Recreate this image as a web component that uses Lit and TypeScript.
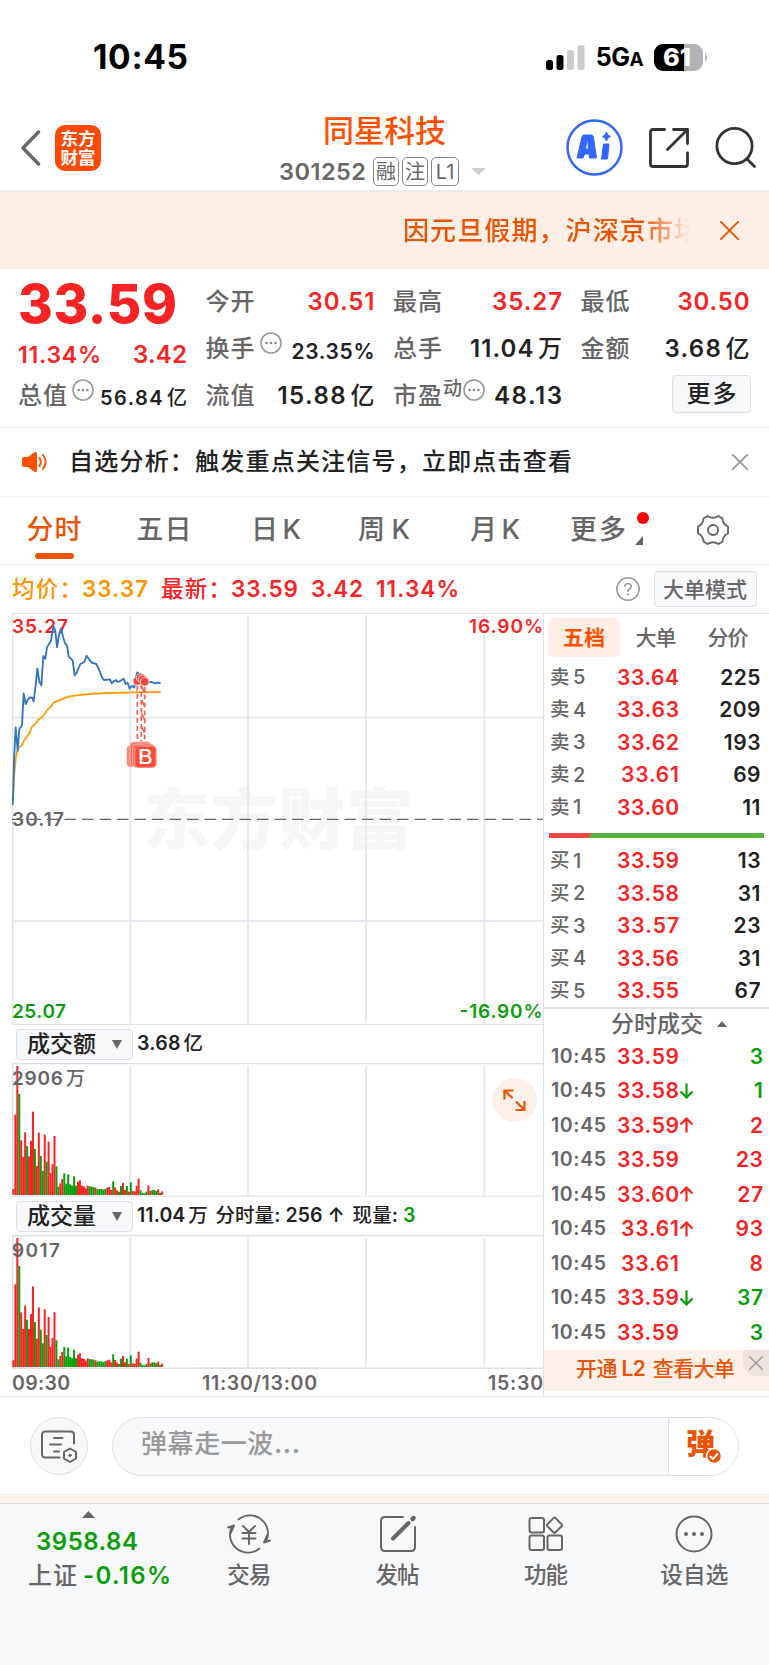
import { LitElement, html, svg, css } from "lit";
import { customElement, property } from "lit/decorators.js";
import { classMap } from "lit/directives/class-map.js";

// Single line of text whose tracking is adjusted to occupy a given width.
// Figures are set slightly heavier than the ideographs and separated from them.
@customElement("fit-text")
class FitText extends LitElement {
  @property({ type: Number }) w = 0;
  @property() text = "";
  static styles = css`
    :host { display: inline-block; flex: none; white-space: pre; line-height: 1; }
    span { display: inline-block; }
    b { font-weight: var(--figure-weight, 580); }
    i { font-style: normal; }
    b + i { margin-left: 0.14em; }
  `;
  render() {
    const runs = this.text.match(/[\u2e80-\uffff]+|[^\u2e80-\uffff]+/g) ?? [];
    return html`<span>${runs.map((r) => (/[\u2e80-\uffff]/.test(r) ? html`<i>${r}</i>` : html`<b>${r}</b>`))}</span>`;
  }
  updated() {
    const s = this.renderRoot.querySelector("span") as HTMLElement;
    s.style.letterSpacing = "0px";
    const natural = s.getBoundingClientRect().width;
    const n = Array.from(this.text).length;
    if (this.w && n > 1) {
      const ls = (this.w - natural) / (n - 1);
      s.style.letterSpacing = ls + "px";
      s.style.marginRight = -ls + "px";
    }
  }
}

const t = (text: string, w: number, cls = "") =>
  html`<fit-text class=${cls} .text=${text} .w=${w}></fit-text>`;

const more = html`<svg class="dots" width="22" height="22" viewBox="0 0 22 22">
  <circle cx="11" cy="11" r="10" fill="none" stroke="#999" stroke-width="1.6" />
  <circle cx="6.6" cy="11" r="1.3" fill="#888" /><circle cx="11" cy="11" r="1.3" fill="#888" /><circle cx="15.4" cy="11" r="1.3" fill="#888" />
</svg>`;

const asks: [string, string, string][] = [
  ["卖5", "33.64", "225"], ["卖4", "33.63", "209"], ["卖3", "33.62", "193"], ["卖2", "33.61", "69"], ["卖1", "33.60", "11"],
];
const bids: [string, string, string][] = [
  ["买1", "33.59", "13"], ["买2", "33.58", "31"], ["买3", "33.57", "23"], ["买4", "33.56", "31"], ["买5", "33.55", "67"],
];
const ticks: [string, number, string, boolean][] = [
  ["33.59", 0, "3", false], ["33.58", -1, "1", false], ["33.59", 1, "2", true], ["33.59", 0, "23", true],
  ["33.60", 1, "27", true], ["33.61", 1, "93", true], ["33.61", 0, "8", true], ["33.59", -1, "37", false], ["33.59", 0, "3", false],
];

const bars =
  "18r 241r 387r 303g 164r 114r 188r 147g 116r 162r 250r 138g 87r 187r 117g 72g 181r 100g 160r 66r 92r 177r 86g 25g 35r 48r 65g 34g 62g 32g 28g 56g 28g 40r 44r 28r 26r 20r 28r 26g 25g 24g 22r 17g 18g 18g 16g 18g 22r 24r 15r 41g 23r 14r 10g 27g 36r 15r 27g 10r 38g 12r 11r 27r 49r 14g 6g 5g 10g 29r 12r 15g 15g 12g 17r 6g 11r".split(" ");
const lots =
  "20r 248r 387r 303g 164r 114r 184r 142g 114r 159r 242r 135g 85r 179r 112g 71g 173r 96g 150r 61r 87r 164r 80g".split(" ");

const price =
  "38,735 40,690 42,600 47,502 53,572 58,508 66,495 71,400 77,432 83,420 89,412 96,413 101,424 107,375 112,325 118,365 124,376 130,288 136,296 141,262 147,252 153,242 160,198 166,212 171,262 177,225 183,205 189,230 195,250 201,256 206,290 212,295 218,302 224,346 230,338 241,312 253,306 260,287 266,296 275,308 289,312 301,338 306,352 312,360 330,358 335,370 341,364 348,360 353,366 359,364 371,356 377,372 383,368 389,386 395,378 403,382 408,350 412,337 420,350 440,366 452,366 460,368 466,370 472,368 482,370";
const average =
  "38,720 42,650 48,590 54,565 66,555 72,542 88,520 96,500 106,492 114,480 128,470 142,450 152,440 162,427 185,418 205,410 230,406 270,402 320,399 400,397 482,396";

@customElement("app-root")
class AppRoot extends LitElement {
  static styles = css`
    :host { display: block; width: 769px; height: 1665px; overflow: hidden; background: #fff; color: #222;
      font-family: Inter, "Noto Sans CJK SC", sans-serif; font-weight: 500; line-height: 1; }
    * { box-sizing: border-box; }
    svg { display: block; flex: none; }
    svg text { font-family: Inter, "Noto Sans CJK SC", sans-serif; }
    .row { display: flex; align-items: center; }
    .red { color: #f82323; } .green { color: #0a9f0a; } .gray { color: #666; } .avg { color: #ff9500; }
    .s19 { font-size: 19.5px; } .s20 { font-size: 20px; } .s21 { font-size: 21px; }
    .s22 { font-size: 22.5px; } .s23 { font-size: 23px; } .s24 { font-size: 24px; } .s26 { font-size: 26px; }

    .status { height: 100px; padding: 15px 61px 0 93px; justify-content: space-between; color: #000; font-weight: 700; }
    .time { font-size: 33.5px; --figure-weight: 700; }
    .signals { gap: 11px; }
    .net { font-size: 25px; letter-spacing: -0.6px; } .net small { font-size: 19px; }

    .header { height: 92px; padding: 5px 13px 0 20px; border-bottom: 2px solid #ececee; }
    .brand { width: 254px; gap: 14px; }
    .logo { width: 46px; height: 46px; border-radius: 10px; background: #ff4800; color: #fff; font-size: 17.5px; line-height: 19px;
      font-weight: 700; text-align: center; padding-top: 4px; }
    .titles { width: 221px; flex: none; display: flex; flex-direction: column; align-items: center; gap: 11px; padding-top: 6px; }
    .name { font-size: 31px; color: #ff5000; }
    .code { gap: 3px; color: #666; align-self: flex-start; margin-left: 5px; }
    .num { font-size: 23.5px; margin-right: 4px; }
    .tag { height: 29px; width: 26px; border: 1.5px solid #888; border-radius: 5px; font-size: 20px; font-weight: 400; display: flex; align-items: center; justify-content: center; }
    .tag.wide { width: 28px; margin-right: 9px; }
    .actions { margin-left: auto; gap: 26px; }

    .notice { height: 77px; background: #fdeee6; color: #ea5504; padding-left: 403px; }
    .notice .clip { width: 287px; overflow: hidden; -webkit-mask-image: linear-gradient(90deg, #000 83%, transparent 100%); padding: 4px 0; }
    .notice svg { margin-left: 30px; }

    .quote { height: 159px; padding: 9px 0 0 18px; display: grid; grid-template-columns: repeat(4, 169px); column-gap: 18.5px; grid-template-rows: repeat(3, 47px); border-bottom: 1.5px solid #f2f2f4; }
    .cell { display: flex; align-items: center; justify-content: space-between; }
    .last { grid-row: span 2; display: flex; flex-direction: column; }
    .big { font-size: 53px; --figure-weight: 800; height: 53px; color: #f82323; }
    .chg { display: flex; justify-content: space-between; padding-top: 12px; align-items: center; }
    .cell .dots { margin: 0 auto 11px 5px; }
    .cell sup { font-size: 19px; line-height: 1; margin: 0 0 33px 0; padding-left: 1px; color: #666; height: 0; }
    .cell sup + .dots { margin-left: 1px; }
    .btn { background: #f7f8fa; border: 1.5px solid #dcdfe6; border-radius: 4px; display: flex; align-items: center; justify-content: center; }
    .cell .btn { margin: 0 -1.5px 3px auto; width: 79px; height: 38px; }
    .small { margin-top: 5px; }

    .signal { height: 69px; padding: 0 21px; border-bottom: 1.5px solid #f2f2f4; }
    .signal fit-text { margin-left: 21px; } .signal .x { margin-left: auto; }

    .tabs { height: 68px; padding-left: 26px; border-bottom: 1.5px solid #f0f0f2; color: #666; font-size: 27px; --figure-weight: 500; }
    .tab { height: 66px; display: flex; flex-direction: column; align-items: center; justify-content: flex-end; gap: 10px; width: 56px; }
    .tab.on { color: #ea5504; }
    .tab i { width: 39px; height: 6px; border-radius: 3px; margin-bottom: 5px; }
    .tab.on i { background: #ea5504; }
    .t2 { margin-left: 54px; } .t3 { margin-left: 56px; } .t4 { margin-left: 52px; } .t5 { margin-left: 55px; } .t6 { margin-left: 47px; }
    .flag { margin-left: 8px; margin-bottom: 2px; } .gear { margin-left: 46px; margin-bottom: 2px; }

    .legend { height: 48px; padding-left: 12px; }
    .legend .v { margin: 0 13px 0 0; }
    .legend .q { margin-left: auto; }
    .legend .btn { width: 103px; height: 36px; margin: 0 12.5px 0 14px; }

    .main { display: flex; height: 784px; border-bottom: 1.5px solid #e6e8ea; }
    .charts { width: 544px; padding-left: 12px; border-right: 1.5px solid #dfe1e8; }
    .pick { height: 38px; padding-left: 4px; }
    .pick .btn { width: 117px; height: 31px; padding: 0 10px; justify-content: space-between; margin-right: 4px; }
    .pick .now { font-weight: 580; }
    .axis { height: 27px; padding-top: 3px; color: #666; }
    .axis .noon { margin: 0 auto 0 132px; }

    .book { width: 225px; border-top: 1.5px solid #dfe1e8; }
    .modes { height: 47px; padding: 4px 0 0 4px; color: #666; align-items: flex-start; }
    .mode { width: 72px; height: 39px; border-radius: 5px; display: flex; align-items: center; justify-content: center; }
    .mode.on { background: #ffeee6; color: #ff5000; font-weight: 700; }
    .lv { height: 32.5px; display: grid; grid-template-columns: 23px 19px 87px 82px; padding-left: 6px; align-items: center; color: #666; }
    .lv > :nth-child(n + 3) { justify-self: end; }
    .qty { color: #222; font-size: 21px; font-weight: 580; letter-spacing: 0.5px; }
    .ratio { height: 21px; padding: 9px 5px 7px 5px; }
    .deals { height: 32px; border-top: 2px solid #dfe1e8; padding: 0 0 0 67px; color: #666; gap: 14px; }
    .tick { height: 34.5px; display: grid; grid-template-columns: 56px 72px 16px 68px; padding-left: 7px; align-items: center; color: #666; }
    .tick > :nth-child(2), .tick > :nth-child(4) { justify-self: end; }
    .tick b { font-weight: 580; font-size: 21px; letter-spacing: 0.6px; margin-right: -0.6px; }
    .l2 { height: 41px; background: #fdf0ea; color: #ea5504; align-items: flex-start; padding: 0 0 0 32px; }
    .l2 fit-text { margin-top: 8px; }
    .l2 .close { margin-left: auto; width: 26px; height: 26px; background: #ede2dd; border-bottom-left-radius: 14px; display: flex; align-items: center; justify-content: center; }

    .chat { height: 97px; padding: 1px 30px 0; justify-content: space-between; }
    .opt { width: 58px; height: 58px; border: 1.5px solid #dcdfe6; border-radius: 50%; background: #f7f8fa; display: flex; align-items: center; justify-content: center; }
    .input { width: 627px; height: 59px; border: 1.5px solid #dcdfe6; border-radius: 30px; background: #f7f8fa; overflow: hidden; color: #999; padding-left: 28px; }
    .input fit-text { margin-bottom: 5px; }
    .send { margin-left: auto; width: 70px; height: 100%; background: #fff; border-left: 1.5px solid #dcdfe6; display: flex; align-items: center; padding-left: 17px; }
    .danmu { font-weight: 900; }
    .strip { height: 9px; background: #fff1ec; border-top: 1px solid #eceef0; }
    .nav { height: 162px; background: #f7f8fa; border-top: 1.5px solid #dcdfe3; padding-left: 26px; display: flex; color: #666; }
    .index { width: 149px; display: flex; flex-direction: column; align-items: center; padding-top: 7px; }
    .index .tri { margin-right: 24px; }
    .index .val { margin: 12px 27px 0 0; }
    .index .foot { margin: 10px 2px 0 0; gap: 6px; }
    .item { width: 148.4px; display: flex; flex-direction: column; align-items: center; padding-top: 10px; gap: 10px; }
  `;

  cross(size: number, color: string, sw: number) {
    return html`<svg class="x" width=${size} height=${size} viewBox="0 0 20 20"><path d="M1 1 19 19M19 1 1 19" stroke=${color} stroke-width=${sw} fill="none" stroke-linecap="round" /></svg>`;
  }

  priceChart() {
    return html`<svg width="531" height="412" viewBox="12 613 531 412">
      <text x="143" y="844" font-size="67" font-weight="900" fill="#f6f6f7" textLength="270">东方财富</text>
      <path d="M130.3 615V1023M248 615V1023M366 615V1023M484.3 615V1023M13 717.7H543M13 921H543" stroke="#e4e7ed" stroke-width="1.8" fill="none" />
      <path d="M12.6 1025V613.4H544M12 1024.6H544" stroke="#dfe1e8" stroke-width="1.4" fill="none" />
      <path d="M12 819.3H544" stroke="#666" stroke-width="1.3" stroke-dasharray="11.5 6" />
      <g font-size="19" font-weight="580">
        <text x="12" y="632.8" fill="#f82323" textLength="56">35.27</text>
        <text x="469" y="632.8" fill="#f82323" textLength="74">16.90%</text>
        <text x="12" y="825.5" fill="#666" textLength="52">30.17</text>
        <text x="12" y="1018" fill="#0a9f0a" textLength="54">25.07</text>
        <text x="459.5" y="1018" fill="#0a9f0a" textLength="83">-16.90%</text>
      </g>
      <g transform="translate(0 560) scale(.33333)" fill="none" stroke-linejoin="round">
        <polyline points=${average} stroke="#ff9d0a" stroke-width="5.5" />
        <polyline points=${price} stroke="#2f74c0" stroke-width="5.5" />
        <path d="M412 378V552M424 372V552M434 380V556" stroke="#fb5a4b" stroke-width="5" stroke-dasharray="14 10" />
        <path d="M424 378 434 398M424 420 434 438M424 460 434 478M424 500 434 518" stroke="#fb5a4b" stroke-width="5" />
        ${[[412, 363], [422, 353], [428, 358], [434, 365]].map(([x, y]) => svg`<circle cx=${x} cy=${y} r="13" fill="#ea4a3c" stroke="#fbd0ca" stroke-width="3" />`)}
        <rect x="380" y="557" width="62" height="64" rx="12" fill="#fb8b7d" />
        <rect x="390" y="546" width="64" height="74" rx="12" fill="#fb7666" stroke="#fdb3a9" stroke-width="3" />
        <rect x="398" y="552" width="64" height="70" rx="12" fill="#fb6a59" stroke="#fdb3a9" stroke-width="3" />
        <rect x="404" y="558" width="64" height="64" rx="12" fill="#ff4a33" stroke="#fb8b7d" stroke-width="4" />
        <text x="414" y="613" font-size="60" font-weight="500" fill="#fff" stroke="none" textLength="44" lengthAdjust="spacingAndGlyphs">B</text>
      </g>
    </svg>`;
  }

  volumeChart(label: string, unit: string, w: number, data: string[], first: boolean) {
    return html`<svg width="531" height="134" viewBox="12 1063 531 134">
      <path d="M130.3 1066V1195M248 1066V1195M366 1066V1195M484.3 1066V1195" stroke="#e4e7ed" stroke-width="1.8" />
      <path d="M12.6 1063V1196M12 1063.6H544" stroke="#dcdee3" stroke-width="1.5" />
      <path d="M12 1196.3H544" stroke=${first ? "#e6e8ee" : "#dcdee3"} stroke-width="1.5" />
      <g transform="translate(12.4 0) scale(.33333)">
        ${data.map((b, i) => {
          const h = parseInt(b);
          return svg`<rect x=${i * 5.87} y=${3585 - h} width="6" height=${h} fill=${b.endsWith("r") ? "#f92222" : "#0a9f0a"} />`;
        })}
      </g>
      <g font-size="19" fill="#666">
        <text x="12" y="1084.8" font-weight="580" textLength=${w}>${label}</text>
        <text x="66" y="1084.8" font-weight="500">${unit}</text>
      </g>
      ${first
        ? svg`<circle cx="514.700" cy="1100" r="22.300" fill="#fdf0e9" /><path d="M513.500 1090.500H504.500V1099.500M504.500 1090.500 512.700 1098.300M524.500 1101V1110H515.500M524.500 1110 516 1101.500" stroke="#ea5504" stroke-width="2.200" fill="none" />`
        : svg`<path d="M198 1196.700H321" stroke="#dcdee3" stroke-width="2" />`}
    </svg>`;
  }

  pick(label: string) {
    return html`<div class="btn">${t(label, 69, "s23")}<svg width="10" height="9" viewBox="0 0 10 9"><path d="M0 0H10L5 9Z" fill="#666" /></svg></div>`;
  }

  levels(rows: [string, string, string][]) {
    return rows.map(
      ([l, p, q]) => html`<div class="lv"><span class="s19">${l[0]}</span><span class="s20">${l[1]}</span>${t(p, p.endsWith("1") ? 58 : 62, "s21 red")}<span class="qty">${q}</span></div>`,
    );
  }

  render() {
    const volume = [...lots, ...bars.slice(23).map((b) => Math.round(parseInt(b) * 0.93) + b.slice(-1))];
    return html`
      <div class="row status">
        ${t("10:45", 95, "time")}
        <div class="row signals">
          <svg width="39" height="25" viewBox="0 0 39 25">
            <rect y="15" width="7" height="10" rx="2.5" /><rect x="10.5" y="10" width="7" height="15" rx="2.5" />
            <rect x="21" y="5" width="7" height="20" rx="2.5" fill="#ccc" /><rect x="31.5" width="7" height="25" rx="2.5" fill="#ccc" />
          </svg>
          <span class="net">5G<small>A</small></span>
          <svg width="54" height="27" viewBox="0 0 54 27">
            <path d="M30 0H40A9 9 0 0 1 49 9V18A9 9 0 0 1 40 27H30Z" fill="#b3b3b3" /><path d="M9 0H30V27H9A9 9 0 0 1 0 18V9A9 9 0 0 1 9 0Z" />
            <path d="M51 9Q55 13.500 51 18Z" fill="#b3b3b3" />
            <text x="9" y="22.200" font-size="24" font-weight="800" fill="#fff" textLength="28" lengthAdjust="spacingAndGlyphs">61</text>
          </svg>
        </div>
      </div>

      <div class="row header">
        <div class="row brand">
          <svg width="21" height="36" viewBox="0 0 21 36"><path d="M18.500 2 3 18 18.500 34" fill="none" stroke="#666" stroke-width="3.400" stroke-linecap="round" stroke-linejoin="round" /></svg>
          <div class="logo">东方<br />财富</div>
        </div>
        <div class="titles">
          ${t("同星科技", 123, "name")}
          <div class="row code">
            ${t("301252", 87, "num")}
            <span class="tag">融</span><span class="tag">注</span><span class="tag wide">L1</span>
            <svg width="15" height="7" viewBox="0 0 15 7"><path d="M0 0H15L7.500 7Z" fill="#ccc" /></svg>
          </div>
        </div>
        <div class="row actions">
          <svg width="57" height="57" viewBox="0 0 57 57">
            <circle cx="28.5" cy="28.5" r="27" fill="none" stroke="#3366ff" stroke-width="2.500" />
            <path d="M18 16H25Q27 16 27.400 18L30.500 39H23.500L23 35H18.500L17 39H11L16 18Q16.500 16 18 16ZM20.800 22 19.500 30H22.500L21.800 22Z" fill="#3366ff" stroke="#3366ff" stroke-width="1" stroke-linejoin="round" />
            <path d="M37.500 25H43L41.500 40H35.500ZM40.500 13Q41 16.500 44.500 17.500Q41 18.500 40.500 22Q39.500 18.500 36.500 17.500Q39.500 16.500 40.500 13Z" fill="#3366ff" stroke="#3366ff" stroke-linejoin="round" />
          </svg>
          <svg width="40" height="40" viewBox="0 0 40 40"><path d="M15.500 1.500H4Q1.500 1.500 1.500 4V36Q1.500 38.500 4 38.500H36Q38.500 38.500 38.500 36V25M24.500 1.500H38.500V15.500M38.500 1.500 18.500 21.500" fill="none" stroke="#333" stroke-width="2.800" stroke-linecap="round" stroke-linejoin="round" /></svg>
          <svg width="41" height="41" viewBox="0 0 41 41"><circle cx="19.500" cy="19" r="17.600" fill="none" stroke="#333" stroke-width="2.800" /><path d="M32 32 39.500 39.500" stroke="#333" stroke-width="2.800" stroke-linecap="round" /></svg>
        </div>
      </div>

      <div class="row notice"><div class="clip">${t("因元旦假期，沪深京市场", 297, "s26")}</div>${this.cross(19, "#ea5504", 2)}</div>

      <div class="quote">
        <div class="last">
          ${t("33.59", 159, "big")}
          <div class="chg red">${t("11.34%", 83, "s23")}${t("3.42", 54, "s24")}</div>
        </div>
        <div class="cell">${t("今开", 49, "s24 gray")}${t("30.51", 67, "s24 red")}</div>
        <div class="cell">${t("最高", 49, "s24 gray")}${t("35.27", 70, "s24 red")}</div>
        <div class="cell">${t("最低", 49, "s24 gray")}${t("30.50", 72, "s24 red")}</div>
        <div class="cell">${t("换手", 49, "s24 gray")}${more}${t("23.35%", 83, "s21 small")}</div>
        <div class="cell">${t("总手", 49, "s24 gray")}${t("11.04万", 92, "s24")}</div>
        <div class="cell">${t("金额", 49, "s24 gray")}${t("3.68亿", 85, "s24")}</div>
        <div class="cell">${t("总值", 49, "s24 gray")}${more}${t("56.84亿", 87, "s20 small")}</div>
        <div class="cell">${t("流值", 49, "s24 gray")}${t("15.88亿", 97, "s24")}</div>
        <div class="cell">${t("市盈", 49, "s24 gray")}<sup>动</sup>${more}${t("48.13", 68, "s24")}</div>
        <div class="cell"><div class="btn">${t("更多", 50, "s24")}</div></div>
      </div>

      <div class="row signal">
        <svg width="27" height="22" viewBox="0 0 27 22"><path d="M3 6H7L13 1.500Q16 0 16 3V19Q16 22 13 20.500L7 16H3Q1 16 1 14V8Q1 6 3 6Z" fill="#ff5000" /><path d="M18.500 7Q21 11 18.500 15M22 4Q27.500 11 22 18" fill="none" stroke="#ff5000" stroke-width="2" stroke-linecap="round" /></svg>
        ${t("自选分析：触发重点关注信号，立即点击查看", 503, "s24")}
        ${this.cross(16, "#999", 2.2)}
      </div>

      <div class="row tabs">
        <div class="tab on">${t("分时", 55)}<i></i></div>
        <div class="tab t2">${t("五日", 55)}<i></i></div>
        <div class="tab t3">${t("日 K", 50)}<i></i></div>
        <div class="tab t4">${t("周 K", 52)}<i></i></div>
        <div class="tab t5">${t("月 K", 50)}<i></i></div>
        <div class="tab t6">${t("更多", 56)}<i></i></div>
        <svg class="flag" width="16" height="36" viewBox="0 0 16 36"><circle cx="9" cy="6" r="6" fill="#f00" /><path d="M9 24V33H1Z" fill="#666" /></svg>
        <svg class="gear" width="34" height="34" viewBox="-17 -17 34 34"><path d="M-5.500 -14Q0 -10.500 5.500 -14L9.500 -11.500Q9.500 -6 15 -3.500V3.500Q9.500 6 9.500 11.500L5.500 14Q0 10.500 -5.500 14L-9.500 11.500Q-9.500 6 -15 3.500V-3.500Q-9.500 -6 -9.500 -11.500Z" fill="none" stroke="#666" stroke-width="1.900" stroke-linejoin="round" /><circle r="5" fill="none" stroke="#666" stroke-width="1.900" /></svg>
      </div>

      <div class="row legend">
        ${t("均价：", 70, "s22 avg")}${t("33.37", 66, "s22 avg v")}
        ${t("最新：", 70, "s22 red")}${t("33.59", 67, "s22 red v")}${t("3.42", 52, "s22 red v")}${t("11.34%", 83, "s22 red")}
        <svg class="q" width="24" height="24" viewBox="0 0 24 24"><circle cx="12" cy="12" r="11.200" fill="none" stroke="#999" stroke-width="1.500" /><path d="M8.800 9.500Q9 6.500 12 6.500T15.200 9.500Q15.200 11 13.500 12T12 15" fill="none" stroke="#999" stroke-width="1.600" /><circle cx="12" cy="17.500" r="1.100" fill="#999" /></svg>
        <div class="btn gray">${t("大单模式", 84, "s21")}</div>
      </div>

      <div class="main">
        <div class="charts">
          ${this.priceChart()}
          <div class="row pick">${this.pick("成交额")}${t("3.68亿", 66, "s19")}</div>
          ${this.volumeChart("2906", "万", 51, bars, true)}
          <div class="row pick">${this.pick("成交量")}${t("11.04万 分时量: 256 ↑ 现量: ", 266, "s19")}<span class="s19 green now">3</span></div>
          ${this.volumeChart("9017", "", 48, volume, false)}
          <div class="row axis">${t("09:30", 58, "s19")}${t("11:30/13:00", 115, "s19 noon")}${t("15:30", 55, "s19")}</div>
        </div>
        <div class="book">
          <div class="row modes"><div class="mode on">${t("五档", 42, "s21")}</div><div class="mode">${t("大单", 41, "s21")}</div><div class="mode">${t("分价", 41, "s21")}</div></div>
          ${this.levels(asks)}
          <div class="ratio"><svg width="215" height="5" viewBox="0 0 215 5"><rect width="215" height="5" fill="#57b43c" /><path d="M0 0H43L39 5H0Z" fill="#ee4545" /></svg></div>
          ${this.levels(bids)}
          <div class="row deals">${t("分时成交", 92, "s23")}<svg width="10" height="6" viewBox="0 0 10 6"><path d="M0 6H10L5 0Z" fill="#666" /></svg></div>
          ${ticks.map(
            ([p, d, q, up]) => html`<div class="tick">${t("10:45", 55, "s19")}${t(p, p.endsWith("1") ? 58 : 62, "s21 red")}
              ${d
                ? html`<svg width="15" height="16" viewBox="0 0 15 16"><path d=${d > 0 ? "M7.500 15.500V1.500M1.500 7.500 7.500 1.500 13.500 7.500" : "M7.500 .5V14.500M1.500 8.500 7.500 14.500 13.500 8.500"} fill="none" stroke=${d > 0 ? "#f82323" : "#0a9f0a"} stroke-width="2.200" /></svg>`
                : html`<i></i>`}
              <b class=${classMap({ red: up, green: !up })}>${q}</b></div>`,
          )}
          <div class="row l2">${t("开通 L2 查看大单", 159, "s21")}<div class="close">${this.cross(14, "#999", 2)}</div></div>
        </div>
      </div>

      <div class="row chat">
        <div class="opt">
          <svg width="36" height="33" viewBox="0 0 36 33" fill="none" stroke="#666" stroke-width="2" stroke-linecap="round"><path d="M33 13.500V5Q33 1.500 29.500 1.500H4.500Q1 1.500 1 5V24Q1 27.500 4.500 27.500H18.500M13 8H21.500M9 14.500H20M13 21.500H18" /><path d="M29 18.500 35 22V28.500L29 32 23 28.500V22Z" stroke-linejoin="round" /><circle cx="29" cy="25.300" r="1.200" fill="#666" stroke-width="1" /></svg>
        </div>
        <div class="row input">
          ${t("弹幕走一波...", 159, "s26")}
          <div class="send"><svg width="36" height="36" viewBox="0 0 36 36"><text class="danmu" x="0" y="27" font-size="29" fill="#ea5504">弹</text><circle cx="28" cy="28" r="7.500" fill="#ea5504" stroke="#fff" stroke-width="1.500" /><path d="M24 28 27 31 32 25.500" fill="none" stroke="#fff" stroke-width="2" /></svg></div>
        </div>
      </div>
      <div class="strip"></div>
      <div class="nav">
        <div class="index">
          <svg class="tri" width="13" height="7" viewBox="0 0 13 7"><path d="M0 7H13L6.500 0Z" fill="#666" /></svg>
          ${t("3958.84", 102, "s24 green val")}
          <div class="row foot">${t("上证", 49, "s24")}${t("-0.16%", 88, "s24 green")}</div>
        </div>
        <div class="item">
          <svg width="44" height="40" viewBox="-22 -20 44 40" fill="none" stroke="#666" stroke-width="1.900" stroke-linecap="round" stroke-linejoin="round"><path d="M-10.500 -14.500A18 18 0 0 1 17.500 6.500M10.500 14.500A18 18 0 0 1 -17.500 -6.500M-21 -6.500 -15 -8.500 -18.300 -1M21 6.500 15 8.500 18.300 1M-6 -8 0 -2 6 -8M0 -2V10M-6.500 -1H6.500M-6.500 4.500H6.500" /></svg>
          ${t("交易", 44, "s22")}
        </div>
        <div class="item">
          <svg width="40" height="40" viewBox="-20 -20 40 40" fill="none" stroke="#666" stroke-width="2" stroke-linecap="round"><path d="M5 -17H-13Q-17 -17 -17 -13V13Q-17 17 -13 17H13Q17 17 17 13V-7" /><path d="M-5 4.500 10.500 -11" stroke-width="4" /><path d="M14.500 -14.800 15.500 -15.800" stroke-width="4.500" /></svg>
          ${t("发帖", 44, "s22")}
        </div>
        <div class="item">
          <svg width="40" height="40" viewBox="-20 -20 40 40" fill="none" stroke="#666" stroke-width="2"><rect x="-16.500" y="-16" width="14.500" height="14.500" rx="2" /><rect x="-16.500" y="1.500" width="14.500" height="14.500" rx="2" /><rect x="1.500" y="1.500" width="14.500" height="14.500" rx="2" /><rect x="2.700" y="-14.500" width="11.500" height="11.500" rx="1.500" transform="rotate(45 8.500 -8.700)" /></svg>
          ${t("功能", 44, "s22")}
        </div>
        <div class="item">
          <svg width="40" height="40" viewBox="-20 -20 40 40"><circle r="17.500" fill="none" stroke="#666" stroke-width="2" /><g fill="#666"><circle cx="-8" r="2" /><circle r="2" /><circle cx="8" r="2" /></g></svg>
          ${t("设自选", 68, "s22")}
        </div>
      </div>
    `;
  }
}
